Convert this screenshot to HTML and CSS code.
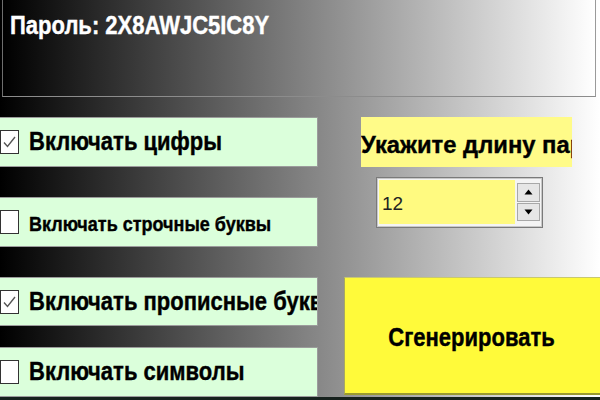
FILE: index.html
```html
<!DOCTYPE html>
<html>
<head>
<meta charset="utf-8">
<link rel="stylesheet" href="styles.css">
</head>
<body>
<div class="form">
  <div class="top-panel">
    <span class="txt pwd">Пароль: 2X8AWJC5IC8Y</span>
  </div>
  <div class="main">
    <div class="left">
      <div class="opt r1">
        <span class="cb checked"><svg viewBox="0 0 19 24" width="19" height="24"><path d="M4 12.5 L7.5 16.5 L15 7" fill="none" stroke="#555" stroke-width="1.4"/></svg></span>
        <span class="txt big">Включать цифры</span>
      </div>
      <div class="opt r2">
        <span class="cb"></span>
        <span class="txt small">Включать строчные буквы</span>
      </div>
      <div class="opt r3">
        <span class="cb checked"><svg viewBox="0 0 19 24" width="19" height="24"><path d="M4 12.5 L7.5 16.5 L15 7" fill="none" stroke="#555" stroke-width="1.4"/></svg></span>
        <span class="txt big">Включать прописные буквы</span>
      </div>
      <div class="opt r4">
        <span class="cb"></span>
        <span class="txt big">Включать символы</span>
      </div>
    </div>
    <div class="right">
      <div class="len-label"><span class="txt label-txt">Укажите длину пароля</span></div>
      <div class="num">
        <div class="num-value">12</div>
        <div class="spin">
          <div class="spin-btn"><svg width="9" height="6" viewBox="0 0 9 6"><path d="M0.5 5.5 L4.5 0.5 L8.5 5.5 Z" fill="#000"/></svg></div>
          <div class="spin-btn"><svg width="9" height="6" viewBox="0 0 9 6"><path d="M0.5 0.5 L4.5 5.5 L8.5 0.5 Z" fill="#000"/></svg></div>
        </div>
      </div>
      <div class="gen-btn"><span class="txt big">Сгенерировать</span></div>
    </div>
  </div>
  <div class="desk"></div>
</div>
</body>
</html>
```

FILE: styles.css
```css
html, body {
  margin: 0;
  padding: 0;
}
body {
  width: 600px;
  height: 400px;
  overflow: hidden;
  font-family: "Liberation Sans", Arial, sans-serif;
  background: linear-gradient(to right, #000 0%, #fff 100%);
}
.form {
  display: flex;
  flex-direction: column;
  height: 400px;
}
.txt {
  display: inline-block;
  font-weight: bold;
  transform: scaleY(1.14);
  white-space: nowrap;
  color: #000;
  -webkit-text-stroke: 0.35px currentColor;
}
.top-panel {
  margin-left: 2px;
  width: 594px;
  border-left: 1px solid #6e6e6e;
  border-right: 1px solid #9a9a9a;
  border-bottom: 1px solid #8c8c8c;
  background: linear-gradient(to right, #000 0%, #fff 100%);
  padding-left: 7px;
  padding-top: 14px;
  box-sizing: border-box;
  height: 97px;
}
.pwd {
  color: #fff;
  font-size: 22px;
  line-height: 24px;
}
.main {
  display: flex;
  padding-top: 20px;
}
.left {
  width: 318px;
  display: flex;
  flex-direction: column;
}
.opt {
  height: 50px;
  box-sizing: border-box;
  border: 1px solid #9c9c9c;
  border-left: none;
  background: #dbffdb;
  display: flex;
  align-items: center;
  overflow: hidden;
  gap: 10px;
}
.r2 { margin-top: 30px; }
.r3 { margin-top: 30px; height: 49px; }
.r4 { margin-top: 21px; }
.cb {
  width: 19px;
  height: 24px;
  box-sizing: border-box;
  border: 1px solid #333;
  background: #fff;
  flex: none;
  display: flex;
  align-items: center;
  justify-content: center;
}
.cb svg { display: block; flex: none; }
.big {
  font-size: 22px;
  line-height: 24px;
}
.small {
  font-size: 18px;
  line-height: 22px;
  margin-top: 4px;
}
.right {
  flex: 1;
  display: flex;
  flex-direction: column;
}
.len-label {
  margin-left: 43px;
  width: 211px;
  height: 50px;
  background: #fffb88;
  overflow: hidden;
  display: flex;
  align-items: center;
  padding-top: 5px;
  box-sizing: border-box;
}
.label-txt {
  font-size: 23.8px;
  line-height: 24px;
  transform: scaleY(1.04);
}
.num {
  margin-top: 10px;
  margin-left: 58px;
  width: 167px;
  height: 51px;
  box-sizing: border-box;
  border: 1px solid #7a7a7a;
  box-shadow: inset 0 0 0 1px #c8c8c8;
  background: #f4f4f4;
  display: flex;
  padding: 2px 2px 3px 2px;
}
.num-value {
  flex: 1;
  background: #fffa80;
  font-size: 19px;
  line-height: 44px;
  padding-left: 3px;
  padding-top: 2px;
  color: #222;
}
.spin {
  width: 23px;
  margin-left: 2px;
  margin-top: 3px;
  display: flex;
  flex-direction: column;
  gap: 1px;
  height: 38px;
}
.spin-btn {
  flex: 1;
  background: #e6e6e6;
  border: 1px solid #a8a8a8;
  display: flex;
  align-items: center;
  justify-content: center;
}
.spin-btn svg { display: block; }
.gen-btn {
  margin-top: 49px;
  margin-left: 26px;
  width: 260px;
  height: 118px;
  box-sizing: border-box;
  background: #fffa3a;
  border-left: 1px solid #a8a860;
  border-top: 1px solid #c8c870;
  border-bottom: 2px solid #9a9a30;
  display: flex;
  align-items: center;
  justify-content: center;
  padding-right: 6px;
  padding-top: 4px;
}
.desk {
  flex: 1;
  background: #17221e;
}
```
